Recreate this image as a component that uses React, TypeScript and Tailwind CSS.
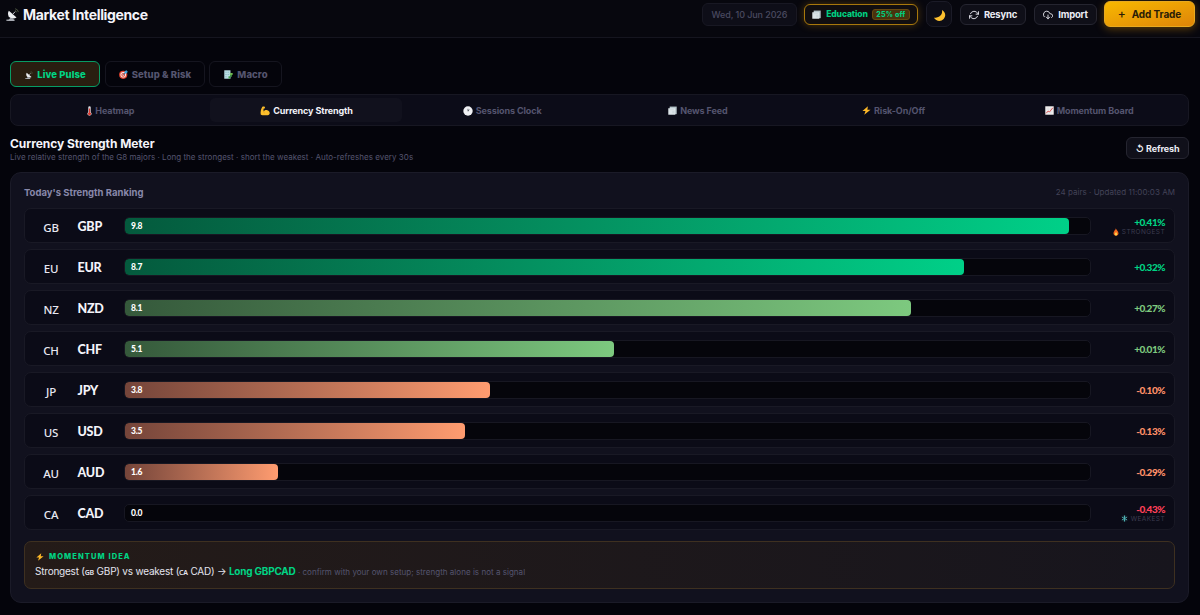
import type { ReactNode } from "react";

type IconProps = { className?: string };

function DishIcon({ className }: IconProps) {
  return (
    <svg viewBox="0 0 16 16" className={className} fill="none">
      <path d="M3.500 3.500 13 11.800C9.600 14 5 13 3.200 10c-1.100-2-1-4.500.3-6.500Z" fill="#eceef1" />
      <path d="m5.500 12-3 3.500h7.800L8.500 12.500Z" fill="#9ba0a9" />
      <path d="M.5 14.300h10v1.500H.5z" fill="#b9bcc3" />
      <path d="m8 8 3.300-3.600" stroke="#c9ccd2" strokeWidth="1.200" />
      <path d="M11 3.200a2.500 2.500 0 0 1 1.900 2.100M11.200.9a4.800 4.800 0 0 1 4 4.100" stroke="#59624a" strokeWidth="1" />
    </svg>
  );
}

function TargetIcon({ className }: IconProps) {
  return (
    <svg viewBox="0 0 16 16" className={className} fill="none">
      <circle cx="7.500" cy="8.500" r="7.300" fill="#e2432f" />
      <circle cx="7.500" cy="8.500" r="5" fill="#f6eeee" />
      <circle cx="7.500" cy="8.500" r="3.300" fill="#e2432f" />
      <circle cx="7.500" cy="8.500" r="1.500" fill="#f6eeee" />
      <path d="m7.500 8.500 4.500-4.500" stroke="#1f5f8f" strokeWidth="1.500" />
      <path d="m9.800 6.200.2-3.700L13.200 0l.6 2.200 2.200.6-2.500 3.200Z" fill="#3ba7e0" />
    </svg>
  );
}

function MacroIcon({ className }: IconProps) {
  return (
    <svg viewBox="0 0 16 16" className={className} fill="none">
      <path d="M.5.5h11v15H.5z" fill="#b9dde3" />
      <path d="M2.500 3h2v2h-2zM6.500 3h2v2h-2zM2.500 7h2v2h-2zM6.500 7h2v2h-2zM2.500 11h2v2h-2z" fill="#86b5c2" />
      <path d="M8 11h3V6h3v6h-3v3H8z" fill="#3f9a45" />
      <path d="M10.500 5.500h5v3h-5z" fill="#78c257" />
    </svg>
  );
}

function ThermometerIcon({ className }: IconProps) {
  return (
    <svg viewBox="0 0 8 16" className={className} fill="none">
      <path d="M2 2.500a2 2 0 0 1 4 0v7.300a3.200 3.200 0 1 1-4 0Z" fill="#d9dce2" />
      <path d="M3 4h2v6.500a2.300 2.300 0 1 1-2 0Z" fill="#dc3b32" />
    </svg>
  );
}

function MuscleIcon({ className }: IconProps) {
  return (
    <svg viewBox="0 0 16 16" className={className} fill="none">
      <path
        d="M3.800 1.200c1.200-.8 3.200-.6 3.900.2.600.8.300 2-.5 2.500l-1.500.5c-.4 1.400-.3 2.800.3 4.100 1.200-1.800 3.600-2.500 5.800-1.900 2.500.7 4 2.800 3.700 5.200-.3 2-2.500 3-5.500 3.100-3.700.2-7.200-.2-8.800-1.400-.8-3.300.3-9.500 2.600-12.300Z"
        fill="#fcbf2c"
      />
      <path d="M6 8.500c-.3 1.200.2 2 1.200 2.600M5.700 4.400 4 4.800" stroke="#c77d12" strokeWidth=".9" />
    </svg>
  );
}

function ClockIcon({ className }: IconProps) {
  return (
    <svg viewBox="0 0 16 16" className={className} fill="none">
      <circle cx="8" cy="8" r="7.500" fill="#f0f1f4" />
      <path d="M8 8.500V4.500M8 8l2.200-2" stroke="#4c515b" strokeWidth="1.300" />
    </svg>
  );
}

function NewsIcon({ className }: IconProps) {
  return (
    <svg viewBox="0 0 16 16" className={className} fill="none">
      <path d="M3 1h12.500v13.500H3z" fill="#b5c4c9" />
      <path d="M.5 4h12.500v11.500H.5z" fill="#dde5e8" />
      <path d="M2.500 6.500h8" stroke="#c3cfd3" strokeWidth="1" />
      <path d="M7.500 8.500h4v4.500h-4z" fill="#cfdade" />
    </svg>
  );
}

function BoltIcon({ className }: IconProps) {
  return (
    <svg viewBox="0 0 16 16" className={className} fill="none">
      <path d="M10.500.5.8 9h5.400l-2.200 6.500L15.200 6.500H9.500Z" fill="#fdb827" />
    </svg>
  );
}

function ChartIcon({ className }: IconProps) {
  return (
    <svg viewBox="0 0 16 16" className={className} fill="none">
      <path d="M.5.500h15v15H.5z" fill="#f1eeee" />
      <path d="M1 5.500h14M1 10.500h14M5.500 1v14M10.500 1v14" stroke="#ccd0d6" strokeWidth=".6" />
      <path d="m2 13 3.500-4L8 10.500 14 3" stroke="#d73c3c" strokeWidth="1.500" />
    </svg>
  );
}

function MoonIcon({ className }: IconProps) {
  return (
    <svg viewBox="0 0 16 16" className={className} fill="none">
      <path d="M11 1.200c1.200 4.800-2.500 9.500-9.800 9.700 2.300 4.300 8.500 5.200 11.900 1.500C16.400 8.800 15.300 3.200 11 1.200Z" fill="#fcc02e" />
    </svg>
  );
}

function FireIcon({ className }: IconProps) {
  return (
    <svg viewBox="0 0 12 16" className={className} fill="none">
      <path d="M5.500.5c.5 3 5.500 5 5.500 10 0 3-2 5-5 5s-5-2-5-5c0-2.500 1.500-3.500 2-5.500C4.800 4 5.500 2.500 5.500.5Z" fill="#f4691e" />
      <path d="M6.200 7.500C6.500 9.500 8.500 10 8.500 12.300a2.500 2.500 0 0 1-5 0c0-2 2-2.300 2.700-4.800Z" fill="#fdd24a" />
    </svg>
  );
}

function SnowIcon({ className }: IconProps) {
  return (
    <svg viewBox="0 0 16 16" className={className} fill="none" stroke="#4fb3b5" strokeWidth="2.200">
      <path d="M8 1v14M2 4.500l12 7M14 4.500l-12 7M6 2l2 2 2-2M6 14l2-2 2 2" />
    </svg>
  );
}

function ResyncIcon({ className }: IconProps) {
  return (
    <svg viewBox="0 0 24 24" className={className} fill="none" stroke="currentColor" strokeWidth="2.200" strokeLinecap="round" strokeLinejoin="round">
      <path d="M23 4v6h-6M1 20v-6h6" />
      <path d="M3.500 9a9 9 0 0 1 14.900-3.400L23 10M1 14l4.600 4.400A9 9 0 0 0 20.500 15" />
    </svg>
  );
}

function ImportIcon({ className }: IconProps) {
  return (
    <svg viewBox="0 0 24 24" className={className} fill="none" stroke="currentColor" strokeWidth="2.200" strokeLinecap="round" strokeLinejoin="round">
      <path d="m8 17 4 4 4-4M12 12v9" />
      <path d="M20.900 18.100A5 5 0 0 0 18 9h-1.300A8 8 0 1 0 3 16.300" />
    </svg>
  );
}

type Strength = {
  flag: string;
  code: string;
  score: string;
  width: number;
  change: string;
  bar: string;
  text: string;
  note?: ReactNode;
};

const green = "from-[#045a3d] to-[#00d088]";
const sage = "from-[#35593b] to-[#7dc97f]";
const orange = "from-[#75453a] to-[#ff9c70]";

const strengths: Strength[] = [
  {
    flag: "GB", code: "GBP", score: "9.8", width: 97.8, change: "+0.41%", bar: green, text: "text-[#00d484]",
    note: <><FireIcon className="h-[8px] w-[6px]" />STRONGEST</>,
  },
  { flag: "EU", code: "EUR", score: "8.7", width: 86.95, change: "+0.32%", bar: green, text: "text-[#00d484]" },
  { flag: "NZ", code: "NZD", score: "8.1", width: 81.4, change: "+0.27%", bar: sage, text: "text-[#7dc97f]" },
  { flag: "CH", code: "CHF", score: "5.1", width: 50.7, change: "+0.01%", bar: sage, text: "text-[#7dc97f]" },
  { flag: "JP", code: "JPY", score: "3.8", width: 37.8, change: "-0.10%", bar: orange, text: "text-[#ff9068]" },
  { flag: "US", code: "USD", score: "3.5", width: 35.2, change: "-0.13%", bar: orange, text: "text-[#ff9068]" },
  { flag: "AU", code: "AUD", score: "1.6", width: 15.9, change: "-0.29%", bar: orange, text: "text-[#ff9068]" },
  {
    flag: "CA", code: "CAD", score: "0.0", width: 0, change: "-0.43%", bar: orange, text: "text-[#ff4058]",
    note: <><SnowIcon className="size-[7px]" />WEAKEST</>,
  },
];

const sections = [
  { label: "Heatmap", icon: <ThermometerIcon className="h-[10px] w-[5px]" /> },
  { label: "Currency Strength", icon: <MuscleIcon className="size-[10px]" />, active: true },
  { label: "Sessions Clock", icon: <ClockIcon className="size-[10px]" /> },
  { label: "News Feed", icon: <NewsIcon className="size-[9px]" /> },
  { label: "Risk-On/Off", icon: <BoltIcon className="size-[9px]" /> },
  { label: "Momentum Board", icon: <ChartIcon className="size-[9px]" /> },
];

function Header() {
  return (
    <header className="flex h-[38px] items-start border-b border-[#15151f] bg-[#07070e] pr-[5px] pl-[6px]">
      <h1 className="flex h-[28px] items-center gap-[4px] text-[14px] font-bold tracking-[-0.360px] text-[#f4f4fa]">
        <DishIcon className="size-[13px]" />
        Market Intelligence
      </h1>
      <div className="ml-auto flex h-[28px] items-center">
        <div className="mr-[7px] flex h-[23px] w-[95px] items-center justify-center rounded-[6px] border border-[#181823] bg-[#0e0e18] pt-px text-[9px] font-medium tracking-[-0.1px] text-[#4a4a60]">
          Wed, 10 Jun 2026
        </div>
        <button className="mr-[8px] flex h-[21px] w-[114px] items-center justify-center rounded-[6px] border border-[#a8780c] bg-[#110e10] text-[8.500px] font-extrabold tracking-[-0.1px] text-[#00cf80] shadow-[0_0_8px_rgba(240,160,0,0.3)]">
          <NewsIcon className="mr-[5px] size-[9px]" />
          Education
          <span className="ml-[4px] flex h-[11px] w-[38px] items-center justify-center rounded-[3px] border border-[#67480f] bg-[#49320e] pt-[2px] text-[7px] tracking-[0.2px]">
            25% off
          </span>
        </button>
        <button className="mr-[8px] flex size-[26px] items-center justify-center rounded-[7px] border border-[#1b1b27] bg-[#0d0d16] pt-[2px]">
          <MoonIcon className="size-[13px]" />
        </button>
        <button className="mr-[8px] flex h-[21px] w-[66px] items-center justify-center gap-[5px] rounded-[6px] border border-[#252530] bg-[#0f0f18] pt-[1.500px] text-[9.500px] font-bold tracking-[-0.2px] text-[#ededf5]">
          <ResyncIcon className="size-[10px]" />
          Resync
        </button>
        <button className="mr-[7px] flex h-[21px] w-[63px] items-center justify-center gap-[5px] rounded-[6px] border border-[#252530] bg-[#0f0f18] pt-[1.500px] text-[9.500px] font-bold tracking-[-0.2px] text-[#ededf5]">
          <ImportIcon className="size-[10px]" />
          Import
        </button>
        <button className="flex h-[26px] w-[91px] items-center justify-center gap-[6px] rounded-[6px] border border-[#e8aa20] bg-linear-to-br from-[#f8b800] to-[#de8508] text-[10px] font-bold tracking-[-0.1px] text-[#291c07] shadow-[0_2px_8px_rgba(245,160,0,0.35)]">
          <span className="text-[12px] font-medium">+</span>
          Add Trade
        </button>
      </div>
    </header>
  );
}

function Tabs() {
  return (
    <div className="flex h-[26px] gap-[4.500px] text-[9.500px] font-extrabold tracking-[0.1px] text-[#55556f]">
      <button className="flex w-[90px] items-center justify-center gap-[4px] rounded-[6px] border border-[#079c64] bg-[#291e10] pt-[1.500px] pl-px text-[#00d484]">
        <DishIcon className="size-[8px]" />
        Live Pulse
      </button>
      <button className="flex w-[100px] items-center justify-center gap-[4px] rounded-[6px] border border-[#15151f] pt-[1.500px] pl-px">
        <TargetIcon className="size-[9px]" />
        Setup &amp; Risk
      </button>
      <button className="flex w-[73px] items-center justify-center gap-[4px] rounded-[6px] border border-[#15151f] pt-[1.500px] pl-px">
        <MacroIcon className="size-[9px]" />
        Macro
      </button>
    </div>
  );
}

function SectionNav() {
  return (
    <nav className="mt-[7px] flex h-[32px] gap-[3px] rounded-[8px] border border-[#171722] bg-[#0c0c18] p-[3px]">
      {sections.map((s) => (
        <button
          key={s.label}
          className={`flex flex-1 items-center justify-center gap-[3px] rounded-[5px] pt-[1.500px] pl-px text-[9px] font-bold tracking-[-0.1px] ${
            s.active ? "bg-[#11111d] text-[#f4f4fa]" : "text-[#55556f]"
          }`}
        >
          {s.icon}
          {s.label}
        </button>
      ))}
    </nav>
  );
}

function StrengthRow({ row }: { row: Strength }) {
  return (
    <div className="flex h-[35px] items-center rounded-[7px] border border-[#191925] bg-[#0b0b17] px-[9px]">
      <span className="mt-[5px] w-[34px] text-center font-['Noto_Sans'] text-[11.500px] font-medium tracking-[-0.2px] text-[#e8e8f2]">
        {row.flag}
      </span>
      <span className="mt-[3px] ml-[9.500px] w-[46.500px] font-['Lato'] text-[12.500px] font-black tracking-[-0.2px] text-[#f4f4fa]">{row.code}</span>
      <div className="relative h-[18px] w-[967px] overflow-hidden rounded-[5px] border border-[#171722] bg-[#05050b]">
        <div className={`h-full rounded-[4px] bg-linear-to-r ${row.bar}`} style={{ width: `${row.width}%` }} />
        <span className="absolute inset-y-0 left-[6px] flex items-center pt-[1.500px] font-['Lato'] text-[8.500px] font-black tracking-[-0.25px] text-white">
          {row.score}
        </span>
      </div>
      <div className="ml-auto flex flex-col items-end">
        <span className={`font-['Lato'] text-[10px] leading-[12px] font-black tracking-[-0.5px] ${row.text}`}>{row.change}</span>
        {row.note && (
          <span className="flex items-center gap-[3px] text-[6.500px] leading-[8px] tracking-[0.4px] text-[#3c3c50]">
            {row.note}
          </span>
        )}
      </div>
    </div>
  );
}

function MomentumIdea() {
  return (
    <div className="mt-[11px] flex h-[48px] flex-col rounded-[7px] border border-[#3e3020] bg-linear-to-r from-[#241b18] to-[#17151d] px-[10px] pt-[9px]">
      <div className="flex h-[12px] items-center gap-[5px] pl-px text-[7.500px] font-extrabold tracking-[1.100px] text-[#00d484]">
        <BoltIcon className="size-[8px]" />
        MOMENTUM IDEA
      </div>
      <p className="text-[10px] leading-[16px] tracking-[-0.220px] whitespace-pre text-[#e4e4ee]">
        Strongest (<span className="font-['Noto_Sans'] text-[7px] font-semibold">GB</span> GBP) vs weakest (
        <span className="font-['Noto_Sans'] text-[7px] font-semibold">CA</span> CAD) →{" "}
        <b className="font-bold text-[#00d484]">Long GBPCAD</b>
        <span className="text-[8px] tracking-[0.030px] text-[#55556f]"> · confirm with your own setup; strength alone is not a signal</span>
      </p>
    </div>
  );
}

export default function App() {
  return (
    <div className="h-[615px] w-[1200px] overflow-hidden bg-[#04040b] font-['Inter',sans-serif]">
      <Header />
      <main className="pt-[23px] pr-[11px] pl-[10px]">
        <Tabs />
        <SectionNav />
        <div className="flex h-[46px] items-start justify-between pt-[11px]">
          <div>
            <h2 className="text-[12px] leading-[14px] font-bold tracking-[-0.060px] text-[#f4f4fa]">Currency Strength Meter</h2>
            <p className="mt-px text-[8px] leading-[10px] tracking-[0.030px] text-[#55556f]">
              Live relative strength of the G8 majors · Long the strongest · short the weakest · Auto-refreshes every 30s
            </p>
          </div>
          <button className="flex h-[22px] w-[63px] items-center justify-center rounded-[6px] border border-[#252530] bg-[#10101a] pt-[1.500px] text-[9px] font-bold tracking-[-0.1px] text-[#ededf5]">
            ↺ Refresh
          </button>
        </div>
        <section className="h-[431px] rounded-[11px] border border-[#1b1b28] bg-[#11111e] px-[13px] pt-[12px]">
          <div className="flex h-[14px] items-center justify-between">
            <h3 className="pt-[2px] text-[9.500px] font-bold text-[#8888aa]">Today's Strength Ranking</h3>
            <span className="text-[8px] tracking-[0.030px] text-[#434358]">24 pairs · Updated 11:00:03 AM</span>
          </div>
          <div className="mt-[9px] flex flex-col gap-[6px]">
            {strengths.map((row) => (
              <StrengthRow key={row.code} row={row} />
            ))}
          </div>
          <MomentumIdea />
        </section>
      </main>
    </div>
  );
}
